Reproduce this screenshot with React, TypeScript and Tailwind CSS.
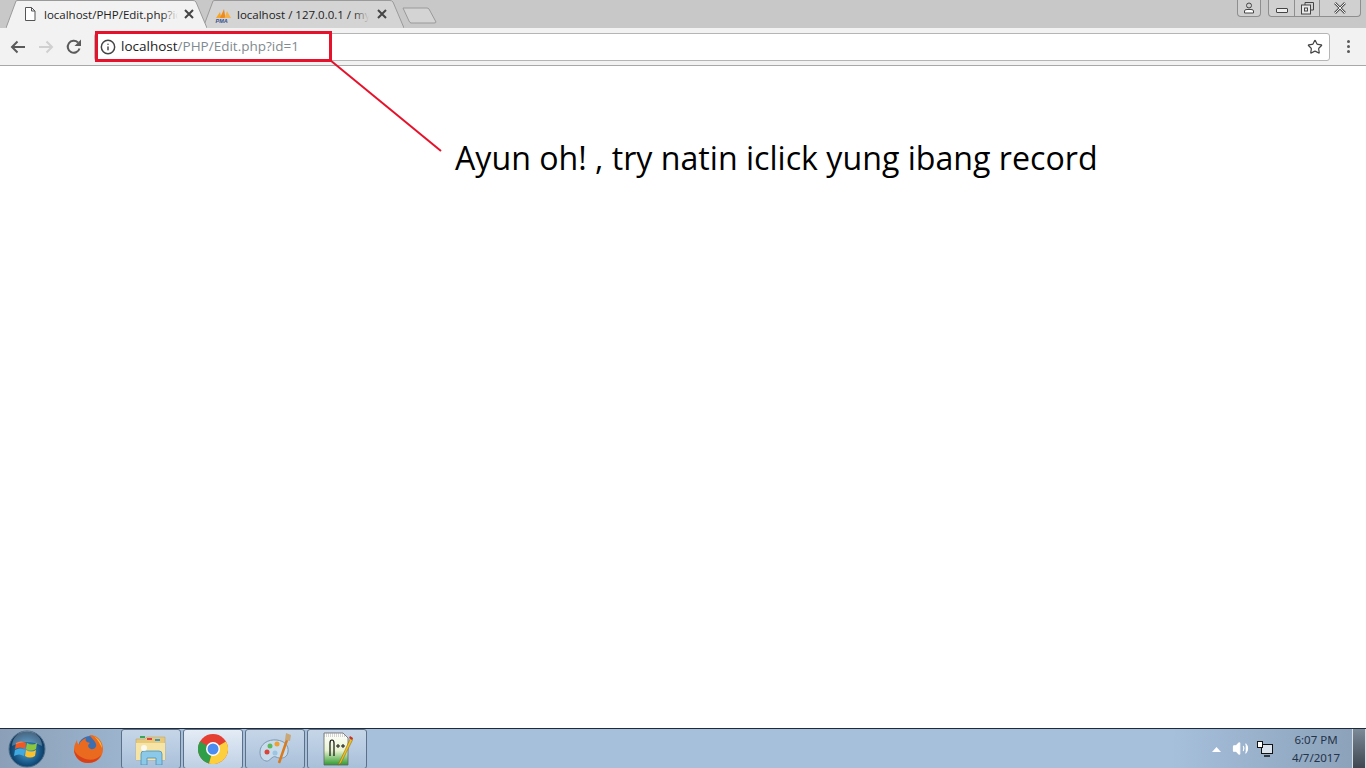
import { Info, Star, Volume2 } from "lucide-react";

const UI_FONT = "font-['Open_Sans','Noto_Sans',sans-serif]";

function CloseX({ dark = "#444" }: { dark?: string }) {
  return (
    <svg width="10" height="10" viewBox="0 0 10 10" className="shrink-0">
      <path d="M1 1 L9 9 M9 1 L1 9" stroke={dark} strokeWidth="2" />
    </svg>
  );
}

function PageIcon() {
  return (
    <svg width="12" height="14" viewBox="0 0 12 14" className="shrink-0">
      <path d="M1.5 .5 H7.5 L11 4 V13.5 H1.5 Z M7.5 .5 V4 H11" fill="#fff" stroke="#555" strokeWidth="1" />
    </svg>
  );
}

function PmaIcon() {
  return (
    <svg width="17" height="15" viewBox="0 0 17 15" className="mt-[3px] shrink-0">
      <path d="M1 10 L5 4 L6.500 10 Z" fill="#f4a62a" />
      <path d="M5 10 L9 1 L10.500 10 Z" fill="#ee8a1c" />
      <path d="M9.500 10 L12 3 L16 10 Z" fill="#f6b24a" />
      <text x="0.500" y="14.500" fontSize="5.500" fontWeight="700" fontStyle="italic" fill="#3a4f8c" fontFamily="'Liberation Sans', sans-serif">PMA</text>
    </svg>
  );
}

function TabShape({ fill, stroke }: { fill: string; stroke: string }) {
  return (
    <svg className="absolute inset-0 h-full w-full" viewBox="0 0 201 28" preserveAspectRatio="none">
      <path d="M0 28 L10 1 Q10.500 .5 12 .5 H187 Q189 .5 190 2 L201 28" fill={fill} stroke={stroke} strokeWidth="1" />
    </svg>
  );
}

function Tab({ active, icon, label, fade }: { active?: boolean; icon: React.ReactNode; label: string; fade: string }) {
  return (
    <div className={`relative h-[28px] w-[201px] shrink-0 ${active ? "z-10" : "-ml-[4px]"}`}>
      <TabShape fill={active ? "#f2f2f2" : "#d4d4d4"} stroke="#9a9a9a" />
      <div className={`relative flex h-full items-center ${active ? "pl-[18px] pr-[13px]" : "pl-[12px] pr-[17px]"}`}>
        {icon}
        <div className={`relative mt-[1px] overflow-hidden whitespace-nowrap text-[11.5px] text-[#222] ${active ? "ml-[8px] w-[134px]" : "ml-[5px] w-[132px]"} ${UI_FONT}`}>
          {label}
          <div className={`absolute inset-y-0 right-0 w-[16px] bg-gradient-to-r from-transparent ${fade}`} />
        </div>
        <div className="ml-auto">
          <CloseX />
        </div>
      </div>
    </div>
  );
}

function WindowControls() {
  return (
    <div className="flex h-[17px] items-start gap-[7px] pr-[5px]">
      <div className="flex h-[17px] w-[24px] items-center justify-center rounded-b-[4px] border border-t-0 border-[#8e8e8e] bg-[#d0d0d0]">
        <svg width="12" height="12" viewBox="0 0 12 12">
          <circle cx="6" cy="3.500" r="2.500" fill="none" stroke="#444" />
          <path d="M1.500 11 V9 Q1.500 7.500 4 7.500 H8 Q10.500 7.500 10.500 9 V11 Z" fill="#fff" stroke="#444" />
        </svg>
      </div>
      <div className="flex h-[17px] rounded-b-[4px] border border-t-0 border-[#8e8e8e] bg-[#d0d0d0]">
        <div className="flex w-[26px] items-center justify-center border-r border-[#8e8e8e] pt-[5px]">
          <div className="h-[5px] w-[12px] rounded-[1px] border border-[#444] bg-[#eee]" />
        </div>
        <div className="flex w-[25px] items-center justify-center border-r border-[#8e8e8e]">
          <svg width="13" height="13" viewBox="0 0 13 13">
            <path d="M4 3 V.500 H12.500 V8 H10" fill="none" stroke="#444" />
            <rect x=".5" y="3" width="9" height="9" fill="#e8e8e8" stroke="#444" />
            <rect x="3.500" y="6" width="3" height="3" fill="none" stroke="#444" />
          </svg>
        </div>
        <div className="flex w-[40px] items-center justify-center">
          <svg width="14" height="12" viewBox="0 0 14 12">
            <path d="M2 1 L12 11 M12 1 L2 11" stroke="#555" strokeWidth="2.500" />
            <path d="M2 1 L12 11 M12 1 L2 11" stroke="#eee" strokeWidth="1" />
          </svg>
        </div>
      </div>
    </div>
  );
}

function Toolbar() {
  return (
    <div className="relative flex h-[38px] items-center border-b border-[#a8a8a8] bg-[#f2f2f2] pl-[10px] pr-[16px]">
      <svg width="16" height="14" viewBox="0 0 16 14" className="shrink-0">
        <path d="M15 7 H2 M7.500 1.500 L2 7 L7.500 12.500" fill="none" stroke="#5a5a5a" strokeWidth="2" />
      </svg>
      <svg width="16" height="14" viewBox="0 0 16 14" className="ml-[12px] shrink-0">
        <path d="M1 7 H14 M8.500 1.500 L14 7 L8.500 12.500" fill="none" stroke="#d0d0d0" strokeWidth="2" />
      </svg>
      <svg width="16" height="16" viewBox="0 0 16 16" className="ml-[12px] shrink-0">
        <path d="M13.500 9.500 A6 6 0 1 1 12 3.500" fill="none" stroke="#5a5a5a" strokeWidth="2" />
        <path d="M15 .5 V7 H8.500 Z" fill="#5a5a5a" />
      </svg>
      <div className="relative ml-[12px] flex h-[28px] flex-1 items-center rounded-[3px] border border-[#b5b5b5] bg-white pl-[5px] pr-[6px]">
        <Info size={16} strokeWidth={2.200} color="#444" className="shrink-0" />
        <div className={`ml-[5px] whitespace-nowrap text-[13.5px] ${UI_FONT}`}>
          <span className="text-[#222]">localhost</span>
          <span className="text-[#808a8f]">/PHP/Edit.php?id=1</span>
        </div>
        <Star size={16} strokeWidth={1.800} color="#444" className="ml-auto shrink-0" />
      </div>
      <div className="ml-[17px] flex shrink-0 flex-col gap-[2px]">
        <div className="h-[3px] w-[3px] rounded-full bg-[#5a5a5a]" />
        <div className="h-[3px] w-[3px] rounded-full bg-[#5a5a5a]" />
        <div className="h-[3px] w-[3px] rounded-full bg-[#5a5a5a]" />
      </div>
    </div>
  );
}

function StartOrb() {
  return (
    <svg width="38" height="38" viewBox="0 0 38 38" className="shrink-0">
      <defs>
        <radialGradient id="orb" cx="50%" cy="55%" r="55%">
          <stop offset="0%" stopColor="#4aa3d6" />
          <stop offset="70%" stopColor="#14507f" />
          <stop offset="100%" stopColor="#0c2f4f" />
        </radialGradient>
      </defs>
      <circle cx="19" cy="19" r="18" fill="url(#orb)" stroke="#4d6f8c" />
      <path d="M8 13 Q13 10 18 13 L17 19 Q12 16 7 19 Z" fill="#ef5a24" />
      <path d="M19 13 Q24 16 29 13 L28 19 Q23 22 18 19 Z" fill="#8cc63f" />
      <path d="M7 20 Q12 17 17 20 L16 26 Q11 23 6 26 Z" fill="#3fa9e0" />
      <path d="M18 20 Q23 23 28 20 L27 26 Q22 29 17 26 Z" fill="#fbc02d" />
      <path d="M4 16 A15 15 0 0 1 34 16 Q19 8 4 16 Z" fill="#fff" opacity=".25" />
    </svg>
  );
}

function Firefox() {
  return (
    <svg width="32" height="32" viewBox="0 0 32 32" className="shrink-0">
      <circle cx="18" cy="15" r="12" fill="#3d6fae" />
      <path d="M17 2 C27 2 31 10 31 16 C31 25 24 30 16 30 C8 30 2 24 2 16 C2 12 4 9 5 7 C5 10 6 11 7 12 C8 8 12 6 14 5 C13 8 14 9 18 10 C15 12 16 15 19 16 C22 17 25 14 24 11 C23 8 19 4 17 2 Z" fill="#ea6a1f" />
      <path d="M2 16 C2 24 8 30 16 30 C22 30 27 27 29 22 C25 27 17 28 11 25 C6 23 3 20 2 16 Z" fill="#d8401a" />
      <path d="M22 3 C27 6 30 10 30 15 C28 11 26 7 22 3 Z" fill="#f6b73c" />
    </svg>
  );
}

function Explorer() {
  return (
    <svg width="32" height="32" viewBox="0 0 32 32">
      <path d="M1 6 H10 L12 4 H30 V27 H1 Z" fill="#e8c97a" stroke="#b8a060" strokeWidth=".500" />
      <rect x="5" y="3" width="5" height="2" fill="#3aa655" />
      <rect x="12" y="5" width="5" height="2" fill="#d44" />
      <rect x="20" y="6" width="5" height="2" fill="#39c" />
      <path d="M1 10 H30 V27 H1 Z" fill="#f6e3a6" />
      <path d="M6 32 V21 Q6 18 9 18 H24 Q27 18 27 21 V32 H21 V25 H12 V32 Z" fill="#8cc8e8" stroke="#4a90b8" strokeWidth=".800" />
      <circle cx="9" cy="15" r="3" fill="#fff" opacity=".8" />
    </svg>
  );
}

function Chrome() {
  return (
    <svg width="30" height="30" viewBox="0 0 30 30">
      <circle cx="15" cy="15" r="15" fill="#e53f33" />
      <path d="M15 15 L2 7.500 A15 15 0 0 0 11 29.500 Z" fill="#2e9e48" />
      <path d="M15 15 L28 7.500 A15 15 0 0 1 11 29.500 Z" fill="#fccf3e" />
      <circle cx="15" cy="15" r="7" fill="#fff" />
      <circle cx="15" cy="15" r="5.500" fill="#4c8bf0" />
    </svg>
  );
}

function PaintIcon() {
  return (
    <svg width="34" height="34" viewBox="0 0 34 34">
      <path d="M2 20 C2 12 10 7 19 8 C26 9 31 13 30 20 C29 27 22 27 18 25 C14 23 12 30 8 29 C4 28 2 25 2 20 Z" fill="#c9dcec" stroke="#7c98b0" />
      <circle cx="9" cy="20" r="2.500" fill="#d8453a" />
      <circle cx="12" cy="14" r="2.500" fill="#5cb85c" />
      <circle cx="19" cy="12" r="2.500" fill="#f0a030" />
      <circle cx="17" cy="21" r="2.500" fill="#9cc4e4" />
      <path d="M30 5 L21 31" stroke="#d97a1e" strokeWidth="2.500" />
      <path d="M27 8 L28 1 L33 3 L32 9 Z" fill="#c8a878" />
    </svg>
  );
}

function NotepadIcon() {
  return (
    <svg width="32" height="34" viewBox="0 0 32 34">
      <defs>
        <linearGradient id="npp" x1="0" y1="0" x2="0" y2="1">
          <stop offset="0%" stopColor="#ffffff" />
          <stop offset="55%" stopColor="#e8f3d0" />
          <stop offset="100%" stopColor="#2f9a2f" />
        </linearGradient>
      </defs>
      <path d="M3 1 H22 L27 6 V33 H3 Z" fill="url(#npp)" stroke="#666" strokeWidth=".800" />
      <path d="M3 2 H22 M3 4 H24" stroke="#999" strokeWidth=".800" strokeDasharray="1 1" />
      <path d="M9 24 V11 Q9 8 11 8 Q13 8 13 11 V24" fill="none" stroke="#111" strokeWidth="1.200" />
      <path d="M15 14 H19 M17 12 V16 M20 14 H24 M22 12 V16" stroke="#111" strokeWidth="1" />
      <path d="M30 5 L19 29 L17 33 L20 31 L32 7 Z" fill="#f0c020" stroke="#806010" strokeWidth=".500" />
      <path d="M29 4 L32 6 L31 8 L28 6 Z" fill="#c8342c" />
    </svg>
  );
}

function TaskButton({ children, lit }: { children: React.ReactNode; lit?: boolean }) {
  return (
    <div
      className={`flex h-[40px] w-[60px] shrink-0 items-center justify-center rounded-[3px] border border-[#5e7088] ${
        lit ? "bg-gradient-to-b from-[#e4ecf6] to-[#bfd0e4]" : "bg-gradient-to-b from-[#c6d6e8] to-[#a9c0da]"
      }`}
    >
      {children}
    </div>
  );
}

function Taskbar() {
  return (
    <div className="flex h-[40px] items-center border-t border-[#1e2a3a] bg-gradient-to-r from-[#8ba0b8] from-0% via-[#a6bfdb] via-[14%] to-[#a6bfdb]">
      <div className="ml-[8px] flex h-full items-center">
        <StartOrb />
      </div>
      <div className="ml-[26px] flex h-full items-center">
        <Firefox />
      </div>
      <div className="ml-[17px] flex h-full items-center gap-[2px]">
        <TaskButton><Explorer /></TaskButton>
        <TaskButton lit><Chrome /></TaskButton>
        <TaskButton><PaintIcon /></TaskButton>
        <TaskButton><NotepadIcon /></TaskButton>
      </div>
      <div className="ml-auto flex h-full items-center bg-gradient-to-r from-[#a6bfdb] to-[#8aa0b8] pl-[40px]">
        <svg width="9" height="5" viewBox="0 0 9 5" className="mt-[2px]">
          <path d="M0 5 L4.500 0 L9 5 Z" fill="#fff" />
        </svg>
        <Volume2 size={17} color="#fff" fill="#fff" strokeWidth={1.500} className="ml-[11px]" />
        <svg width="16" height="16" viewBox="0 0 16 16" className="ml-[8px]">
          <rect x="4.500" y="3.500" width="11" height="9" fill="#dbe4ee" stroke="#111" />
          <path d="M7 15 H13" stroke="#111" strokeWidth="1.500" />
          <rect x=".5" y=".5" width="5" height="6" fill="#fff" stroke="#111" />
        </svg>
        <div className="ml-[12px] w-[62px] text-center text-[11.5px] leading-[18px] text-[#24344a] font-['Noto_Sans',sans-serif]">
          <div>6:07 PM</div>
          <div>4/7/2017</div>
        </div>
        <div className="ml-[5px] h-full w-[14px] border-x border-[#d8e0ea] bg-gradient-to-b from-[#7d8a98] to-[#3f4852]" />
      </div>
    </div>
  );
}

export default function App() {
  return (
    <div className="relative flex h-screen w-full flex-col overflow-hidden bg-white">
      {/* Tab strip */}
      <div className="flex h-[28px] shrink-0 items-start justify-between bg-[#c8c8c8]">
        <div className="flex items-start pl-[6px]">
          <Tab active icon={<PageIcon />} label="localhost/PHP/Edit.php?id=1" fade="to-[#f2f2f2]" />
          <Tab icon={<PmaIcon />} label="localhost / 127.0.0.1 / mysql" fade="to-[#d4d4d4]" />
          <svg width="35" height="17" viewBox="0 0 35 17" className="-ml-[2px] mt-[7px]">
            <path d="M1 1 H25 Q26 1 27 2 L34 15 Q34 16 32 16 H9 Q8 16 7 14 Z" fill="#d4d4d4" stroke="#9a9a9a" />
          </svg>
        </div>
        <WindowControls />
      </div>

      <Toolbar />

      {/* Page body */}
      <div className="relative flex-1" />

      <Taskbar />

      {/* Annotation drawn on top of the screenshot */}
      <div className="absolute left-[95px] top-[31px] h-[31px] w-[237px] border-[3px] border-[#e6112a]" />
      <svg className="absolute left-[328px] top-[58px]" width="116" height="96" viewBox="0 0 116 96">
        <path d="M2 2 L113 93" stroke="#e6112a" strokeWidth="2" fill="none" />
      </svg>
      <div className="absolute left-[455px] top-[136px] whitespace-nowrap text-[32.15px] leading-[44px] text-black font-['Open_Sans',sans-serif]">
        Ayun oh! , try natin iclick yung ibang record
      </div>
    </div>
  );
}
